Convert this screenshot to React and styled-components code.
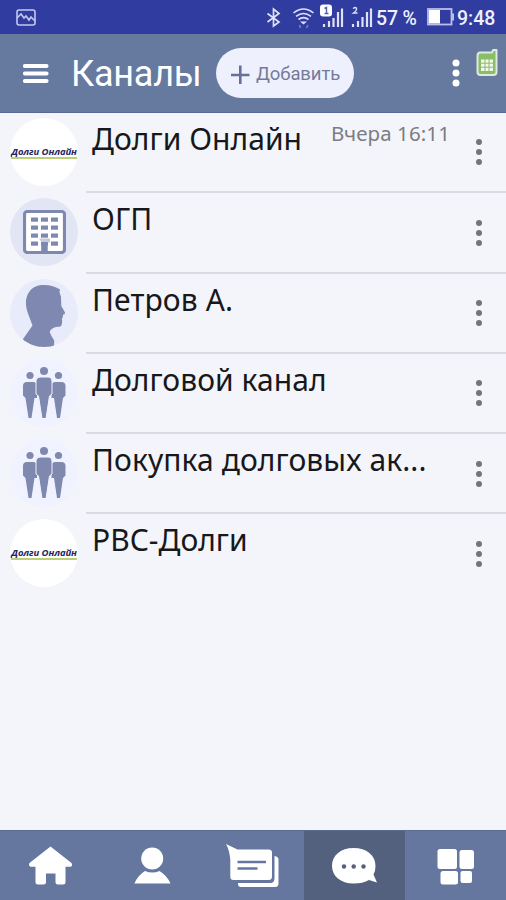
import React from "react";
import styled, { createGlobalStyle } from "styled-components";

const Global = createGlobalStyle`
  * { box-sizing: border-box; }
  body { margin: 0; background: #f3f5fa; }
  button { border: 0; padding: 0; background: none; font: inherit; color: inherit; }
  svg { display: block; flex: none; }
`;

const Screen = styled.div`
  width: 506px;
  height: 900px;
  display: flex;
  flex-direction: column;
  overflow: hidden;
  background: #f3f5fa;
  font-family: "Noto Sans", sans-serif;
`;

const StatusBar = styled.div`
  flex: none;
  height: 34px;
  padding: 0 10px 0 16px;
  display: flex;
  align-items: center;
  background: #303c9f;
  color: #eef0ff;
  font-family: Roboto, sans-serif;
`;

const StatusIcons = styled.div`
  margin-left: auto;
  display: flex;
  align-items: center;
`;

const StatusText = styled.span`
  width: ${(p) => p.$width}px;
  margin-left: ${(p) => p.$gap}px;
  padding-top: 3px;
  font-size: 19.5px;
  font-weight: 500;
  line-height: 24px;
  letter-spacing: ${(p) => p.$spacing || 0}px;
  white-space: nowrap;
`;

const Header = styled.header`
  flex: none;
  height: 79px;
  padding-left: 23px;
  display: flex;
  align-items: center;
  background: #66799f;
  border-bottom: 1px solid #596894;
`;

const MenuButton = styled.button`
  width: 26px;
  height: 22px;
`;

const Title = styled.h1`
  width: 145px;
  margin: 2px 0 0 22px;
  color: #fff;
  font: 400 36px/44px Roboto, sans-serif;
  letter-spacing: -0.2px;
  white-space: nowrap;
`;

const AddButton = styled.button`
  && {
    width: 138px;
    height: 50px;
    padding: 1px 0 0 15px;
    display: flex;
    align-items: center;
    gap: 6px;
    border-radius: 25px;
    background: #eff0fd;
    color: #747b9a;
    font: 400 18.5px/24px Roboto, sans-serif;
    letter-spacing: -0.1px;
    white-space: nowrap;
  }
`;

const HeaderActions = styled.div`
  margin-left: 95px;
  height: 100%;
  display: flex;
  gap: 13px;
  padding-top: 14px;
`;

const HeaderMore = styled.button`
  && { padding-top: 11px; }
  width: 14px;
  height: 39px;
`;

const List = styled.ul`
  flex: 1;
  margin: 0;
  padding: 0;
  list-style: none;
`;

const Row = styled.li`
  height: 80.3px;
  display: flex;
  padding-left: 10px;
`;

const Avatar = styled.div`
  width: 68px;
  height: 68px;
  margin-top: 5px;
  flex: none;
  display: flex;
  align-items: center;
  justify-content: center;
  overflow: hidden;
  border-radius: 50%;
  background: ${(p) => p.$tone};
`;

const Brand = styled.div`
  width: 66px;
  margin-top: 1px;
  border-bottom: 2px solid #bbcf77;
  color: #27235f;
  font: italic 700 9.5px/11px "Open Sans", sans-serif;
  letter-spacing: -0.1px;
  text-align: center;
  white-space: nowrap;
`;

const RowBody = styled.div`
  flex: 1;
  margin-left: 8px;
  padding: 5px 20px 0 6px;
  display: flex;
  border-bottom: ${(p) => (p.$last ? "0" : "2px solid #d8dbe1")};
`;

const Name = styled.span`
  color: #17181b;
  font-size: 30px;
  line-height: 41px;
  letter-spacing: ${(p) => p.$spacing}px;
  white-space: nowrap;
`;

const Time = styled.time`
  margin: 0 22px 0 auto;
  color: #7b7d83;
  font-size: 20.5px;
  line-height: 30px;
  letter-spacing: 0.1px;
  white-space: nowrap;
`;

const RowMore = styled.button`
  && { margin-left: ${(p) => (p.$afterTime ? "0" : "auto")}; }
  width: 14px;
  height: 28px;
  margin-top: 20.4px;
`;

const NavBar = styled.nav`
  flex: none;
  height: 70px;
  display: grid;
  grid-template-columns: repeat(5, 1fr);
  background: #65779f;
  border-top: 1px solid #596a94;
`;

const NavItem = styled.button`
  && { background: ${(p) => (p.$active ? "#53617f" : "transparent")}; }
  display: flex;
  align-items: center;
  justify-content: center;
`;

const Dots = ({ color, r, gap }) => (
  <svg width="14" height="28" viewBox="0 0 14 28" fill={color}>
    <circle cx="7" cy={14 - gap} r={r} />
    <circle cx="7" cy="14" r={r} />
    <circle cx="7" cy={14 + gap} r={r} />
  </svg>
);

const PictureIcon = () => (
  <svg width="20" height="17" viewBox="0 0 20 17" fill="none" stroke="#c3c8f0" strokeWidth="1.6">
    <rect x="1" y="1" width="18" height="15" rx="2" />
    <path d="M1 9 5 5l3 4 2-2 3 4 2-3 4 4" />
  </svg>
);

/* Bluetooth, Wi-Fi and the signal strength of both SIM cards. */
const RadioIcons = () => (
  <svg width="109" height="26" viewBox="263 4 109 26" fill="none" stroke="#dde1fa">
    <path d="M265.5 13.5 277 22l-5.5 4V9l5.5 4.5-11.5 8.5" strokeWidth="1.7" />
    <g strokeWidth="1.6">
      <path d="M291.5 13q10-8 20 0M294 16.3q7.500-5.600 15 0M296.500 19.500q5-3.800 10 0" />
      <path d="M298 21.500h7l-3.500 3z" fill="#dde1fa" stroke="none" />
    </g>
    <path d="m297.500 25 1 3M304.500 28l1.500-3" stroke="#7883ce" strokeWidth="1.500" />
    <path d="M322 27v-3M327 27v-6M331.500 27v-9M336 27V12M340 27V8.500" strokeWidth="2.200" />
    <path d="M351 27v-3M356 27v-6M360.500 27v-10M365 27V12M369 27V8.500" strokeWidth="2.200" />
    <rect x="318" y="4.500" width="12" height="12" rx="3" fill="#fff" stroke="none" />
    <path d="m322.500 8.500 2-1v6M322.500 13.500h4" stroke="#5660a8" strokeWidth="1.400" />
    <path d="M351 8.500q3-2 3.500 0T351.500 13h4" strokeWidth="1.400" />
  </svg>
);

const BatteryIcon = () => (
  <svg width="28" height="18" viewBox="0 0 28 18">
    <rect x="1" y="1" width="23.500" height="15.500" fill="none" stroke="#b9bfea" strokeWidth="1.800" />
    <path d="M2 2h11v13.500H2z" fill="#fff" />
    <path d="M25 5.500h2v7h-2z" fill="#b9bfea" />
  </svg>
);

const MenuIcon = () => (
  <svg width="26" height="22" viewBox="0 0 26 22" stroke="#fff" strokeWidth="4.2" strokeLinecap="round">
    <path d="M2 4h21.500M2 11.500h21.500M2 19h21.500" />
  </svg>
);

const PlusIcon = () => (
  <svg width="19" height="20" viewBox="0 0 19 20" stroke="#66709a" strokeWidth="2.600">
    <path d="M0 11h18.500M9.300 1.500v18.500" />
  </svg>
);

const PhoneIcon = () => (
  <svg width="23" height="30" viewBox="0 0 23 30">
    <path d="M4 4.500h12l1-2.500h3.500v22q0 3-3 3h-13q-3 0-3-3v-16q0-3.500 2.500-3.500z" fill="#8abd68" stroke="#dcebdc" strokeWidth="2" strokeLinejoin="round" />
    <path d="M5 11.500h12v11.500H5z" fill="#f3f8ed" />
    <path d="M9 11v12M13 11v12M5 15.200h12M5 19.200h12" stroke="#8abd68" strokeWidth="1" />
  </svg>
);

const BuildingIcon = () => (
  <svg width="43" height="44" viewBox="0 0 43 44" fill="#7f88af">
    <rect x="1.500" y="1.500" width="40" height="41" rx="3" fill="#fff" stroke="#7f88af" strokeWidth="3.200" />
    {[7.5, 15.5, 23.5, 31.5].map((y) =>
      [8, 18, 28].map((x) => <rect key={`${x}-${y}`} x={x} y={y} width="7" height="4.200" />)
    )}
    <path d="M16 28.500h11v4h-8z" fill="#c3c9de" />
    <path d="M18.200 32h6.500v11h-6.500z" />
  </svg>
);

/* Head in profile, facing right. */
const ProfileIcon = () => (
  <svg width="68" height="68" viewBox="0 0 68 68" fill="#7f88b0">
    <path d="M19.500 12.500C23 7.500 28 6 34 6c6.500 0 12 2 16 4.500l-.5 2.500 1.500 5 .3 9 3.700 6.500q.3 1.700-2 2.300l-.3 2.700-.9 1.500.4 2q-.2 5.500-2.500 5.800c-5.500 0-9 2-10 5.200l1.500 3.500 3 5-.2 6.700q-18 3-31.500-7.500L22.500 46.500 18 34.500C15.500 27.500 14.500 19 19.500 12.500z" />
  </svg>
);

const PeopleIcon = () => (
  <svg width="44" height="54" viewBox="0 0 44 54" fill="#7f88af">
    <circle cx="22" cy="5" r="4" />
    <circle cx="8" cy="9.500" r="3.600" />
    <circle cx="36.500" cy="9.500" r="3.600" />
    <path d="M5 16h6q4 0 4 4v12h-2.500L9.500 52H6.500L3.500 32 1 29.500V20q0-4 4-4zM33.500 16h6q4 0 4 4v9.500l-2.500 2.500-3 20h-3l-3-20h-2.500V20q0-4 4-4z" />
    <path d="M19 11h7q4 0 4 4.500V28l-2.500 2L24 52.500h-4L16.500 30 14 28V15.500q0-4.500 5-4.500z" stroke="#f1f3ff" strokeWidth="1" />
  </svg>
);

const HomeIcon = () => (
  <svg width="44" height="42" viewBox="29 845 44 42" fill="#fff">
    <path d="M50.500 846.500 71.500 863q1.500 3-1 3.800H65.500V882q0 2.500-2.500 2.500h-5q-2.500 0-2.500-2.500v-8.500H46V882q0 2.500-2.500 2.500h-5.500q-2.500 0-2.500-2.500v-15.200h-5q-2.500-1-1-3.800z" />
  </svg>
);

const UserIcon = () => (
  <svg width="38" height="38" viewBox="133 846.5 38 38" fill="#fff">
    <circle cx="152.200" cy="858" r="11" />
    <path d="M134.500 883q3-8 10.500-12.500 7.500 3 14.500 0Q167 875 170.500 883z" />
  </svg>
);

const NewsIcon = () => (
  <svg width="54" height="44" viewBox="226 844 54 44" fill="#fff">
    <path d="M238 883v1q0 3 3 3h34q3.500 0 3.500-3.500v-24q0-3-4-3.500v22q0 5-4 5z" />
    <path d="M226 844 237.500 849.500h31q3.500 0 3.500 3v24q0 3.500-3.500 3.500h-35q-3.200 0-3.200-3.500v-17q-1-10-4.300-15.500z" />
    <path d="M237.500 862h28.500M237.500 868.500h20" stroke="#65779f" strokeWidth="2.500" />
  </svg>
);

const ChatIcon = () => (
  <svg width="46" height="38" viewBox="331 846.5 46 38" fill="#fff">
    <path d="M353.500 847.500c13 0 22 7 22 18q0 5-2 8.500l3.500 8-8-2.500q-6 3.500-15.500 3.500c-13 0-21.500-7.500-21.500-17.500 0-11 9-18 21.500-18z" />
    <g fill="#53617f">
      <circle cx="344" cy="866" r="2.200" />
      <circle cx="353.700" cy="866" r="2.200" />
      <circle cx="363.500" cy="866" r="2.200" />
    </g>
  </svg>
);

const TilesIcon = () => (
  <svg width="38" height="38" viewBox="436.5 847 38 38" fill="#fff">
    <rect x="438" y="849" width="19.500" height="20" rx="2.500" />
    <rect x="460" y="850" width="14.500" height="19" rx="2.500" />
    <rect x="441" y="871" width="17.500" height="13.500" rx="2.500" />
    <rect x="461" y="871" width="11.500" height="12" rx="2" />
  </svg>
);

const BrandMark = () => <Brand>Долги Онлайн</Brand>;

const channels = [
  { name: "Долги Онлайн", time: "Вчера 16:11", Icon: BrandMark, tone: "#fff", spacing: 0.05 },
  { name: "ОГП", Icon: BuildingIcon, tone: "#e1e5f4", spacing: 0.1 },
  { name: "Петров А.", Icon: ProfileIcon, tone: "#e8ebfa", spacing: 0.1 },
  { name: "Долговой канал", Icon: PeopleIcon, tone: "#f0f3ff", spacing: 0.05 },
  { name: "Покупка долговых ак...", Icon: PeopleIcon, tone: "#f0f3ff", spacing: 0.08 },
  { name: "РВС-Долги", Icon: BrandMark, tone: "#fff", spacing: 0 },
];

const tabs = [HomeIcon, UserIcon, NewsIcon, ChatIcon, TilesIcon];

export default function App() {
  return (
    <Screen>
      <Global />
      <StatusBar>
        <PictureIcon />
        <StatusIcons>
          <RadioIcons />
          <StatusText $width={51} $gap={2} $spacing={-0.2}>57 %</StatusText>
          <BatteryIcon />
          <StatusText $width={39} $gap={2}>9:48</StatusText>
        </StatusIcons>
      </StatusBar>
      <Header>
        <MenuButton><MenuIcon /></MenuButton>
        <Title>Каналы</Title>
        <AddButton><PlusIcon />Добавить</AddButton>
        <HeaderActions>
          <HeaderMore><Dots color="#fff" r={3.5} gap={10} /></HeaderMore>
          <PhoneIcon />
        </HeaderActions>
      </Header>
      <List>
        {channels.map(({ name, time, Icon, tone, spacing }, i) => (
          <Row key={name}>
            <Avatar $tone={tone}><Icon /></Avatar>
            <RowBody $last={i === channels.length - 1}>
              <Name $spacing={spacing}>{name}</Name>
              {time && <Time>{time}</Time>}
              <RowMore $afterTime={Boolean(time)}><Dots color="#74757b" r={3} gap={10} /></RowMore>
            </RowBody>
          </Row>
        ))}
      </List>
      <NavBar>
        {tabs.map((Icon, i) => (
          <NavItem key={i} $active={i === 3}><Icon /></NavItem>
        ))}
      </NavBar>
    </Screen>
  );
}
